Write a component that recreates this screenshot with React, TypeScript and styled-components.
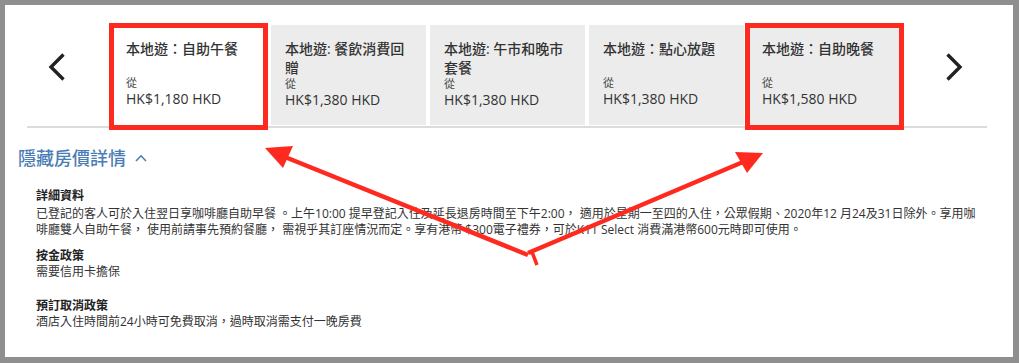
import React from 'react';
import styled, { createGlobalStyle } from 'styled-components';

const GlobalStyle = createGlobalStyle`
    html, body {
        margin: 0;
        padding: 0;
        background: #ffffff;
    }
    body {
        font-family: "Open Sans", "Noto Sans CJK TC", sans-serif;
        color: #333333;
    }
`;

const Frame = styled.div`
    position: relative;
    box-sizing: border-box;
    width: 1019px;
    height: 363px;
    background: #ffffff;
    border: 5px solid #8f8f8f;
    border-right-width: 6px;
    border-bottom-width: 6px;
    overflow: hidden;
`;

const Carousel = styled.div`
    display: flex;
    align-items: stretch;
    width: 960px;
    margin: 20px 0 0 22px;
    padding-bottom: 1px;
    border-bottom: 2px solid #dcdcdc;
`;

const NavButton = styled.button<{ $width: number; $pad: number }>`
    display: flex;
    align-items: flex-start;
    box-sizing: border-box;
    width: ${p => p.$width}px;
    padding: 27px 0 0 ${p => p.$pad}px;
    margin: 0;
    border: none;
    background: transparent;
    cursor: pointer;
`;

const CardRow = styled.div`
    display: flex;
    gap: 4px;
`;

const Card = styled.div<{ $active?: boolean }>`
    position: relative;
    display: flex;
    flex-direction: column;
    justify-content: space-between;
    box-sizing: border-box;
    width: 155px;
    height: 100px;
    padding: 14px 14px 17px;
    background: ${p => (p.$active ? '#ffffff' : '#ececec')};
`;

const CardTitle = styled.div`
    font-size: 14px;
    line-height: 19px;
    font-weight: 500;
    color: #333333;
`;

const FromLabel = styled.div`
    font-size: 11px;
    line-height: 14px;
    color: #444444;
`;

const Price = styled.div`
    font-size: 14px;
    line-height: 18px;
    color: #333333;
`;

// 紅色標記框 (annotation)
const Highlight = styled.span`
    position: absolute;
    top: -2px;
    left: -3px;
    right: -1px;
    bottom: -5px;
    border: 5px solid #ff2a1f;
    pointer-events: none;
    z-index: 2;
`;

const Toggle = styled.div`
    display: flex;
    align-items: center;
    gap: 9px;
    margin: 18px 0 0 13px;
    font-size: 18px;
    line-height: 24px;
    font-weight: 500;
    color: #4a7db5;
    cursor: pointer;
`;

const Details = styled.div`
    margin: 18px 0 0 31px;
    font-size: 12px;
    line-height: 16px;
    color: #333333;
`;

const Section = styled.div<{ $top: number }>`
    margin-top: ${p => p.$top}px;
`;

const SectionTitle = styled.div<{ $gap?: number }>`
    margin-bottom: ${p => p.$gap ?? 0}px;
    font-weight: 700;
    color: #222222;
`;

const Line = styled.div`
    white-space: nowrap;
`;

const Overlay = styled.svg`
    position: absolute;
    top: -5px;
    left: -5px;
    pointer-events: none;
    z-index: 3;
`;

const cards = [
    { title: '本地遊：自助午餐', price: 'HK$1,180 HKD', active: true, marked: true },
    { title: '本地遊: 餐飲消費回贈', price: 'HK$1,380 HKD' },
    { title: '本地遊: 午市和晚市套餐', price: 'HK$1,380 HKD' },
    { title: '本地遊：點心放題', price: 'HK$1,380 HKD' },
    { title: '本地遊：自助晚餐', price: 'HK$1,580 HKD', marked: true },
];

const Chevron: React.FC<{ dir: 'left' | 'right' }> = ({ dir }) => (
    <svg width="18" height="30" viewBox="0 0 18 30">
        <polyline
            points={dir === 'left' ? '15.5,2.5 3,15 15.5,27.5' : '2.5,2.5 15,15 2.5,27.5'}
            fill="none"
            stroke="#222222"
            strokeWidth="3.4"
        />
    </svg>
);

const App: React.FC = () => {
    return (
        <>
            <GlobalStyle />
            <Frame>
                <Carousel>
                    <NavButton $width={85} $pad={21} aria-label="上一個">
                        <Chevron dir="left" />
                    </NavButton>
                    <CardRow>
                        {cards.map(c => (
                            <Card key={c.title} $active={c.active}>
                                <CardTitle>{c.title}</CardTitle>
                                <div>
                                    <FromLabel>從</FromLabel>
                                    <Price>{c.price}</Price>
                                </div>
                                {c.marked && <Highlight />}
                            </Card>
                        ))}
                    </CardRow>
                    <NavButton $width={84} $pad={42} aria-label="下一個">
                        <Chevron dir="right" />
                    </NavButton>
                </Carousel>

                <Toggle>
                    <span>隱藏房價詳情</span>
                    <svg width="12" height="8" viewBox="0 0 12 8">
                        <polyline points="1,7 6,1.8 11,7" fill="none" stroke="#4a7db5" strokeWidth="1.6" />
                    </svg>
                </Toggle>

                <Details>
                    <Section $top={0}>
                        <SectionTitle $gap={2}>詳細資料</SectionTitle>
                        <Line>已登記的客人可於入住翌日享咖啡廳自助早餐 。上午10:00 提早登記入住及延長退房時間至下午2:00， 適用於星期一至四的入住，公眾假期、2020年12 月24及31日除外。享用咖</Line>
                        <Line>啡廳雙人自助午餐， 使用前請事先預約餐廳， 需視乎其訂座情況而定。享有港幣 $300電子禮券，可於K11 Select 消費滿港幣600元時即可使用。</Line>
                    </Section>
                    <Section $top={10}>
                        <SectionTitle>按金政策</SectionTitle>
                        <Line>需要信用卡擔保</Line>
                    </Section>
                    <Section $top={18}>
                        <SectionTitle>預訂取消政策</SectionTitle>
                        <Line>酒店入住時間前24小時可免費取消，過時取消需支付一晚房費</Line>
                    </Section>
                </Details>

                <Overlay width="1019" height="363" viewBox="0 0 1019 363">
                    <g stroke="#ff2a1f" fill="none" strokeWidth="4.5">
                        <line x1="528" y1="255" x2="285" y2="157" />
                        <line x1="528" y1="253" x2="743" y2="162" />
                    </g>
                    <line x1="532" y1="252" x2="537" y2="265" stroke="#ff2a1f" strokeWidth="3.5" />
                    <g fill="#ff2a1f">
                        <polygon points="265,148 293,146 283,168" />
                        <polygon points="763,153 735,152 747,173" />
                    </g>
                </Overlay>
            </Frame>
        </>
    );
};

export default App;
